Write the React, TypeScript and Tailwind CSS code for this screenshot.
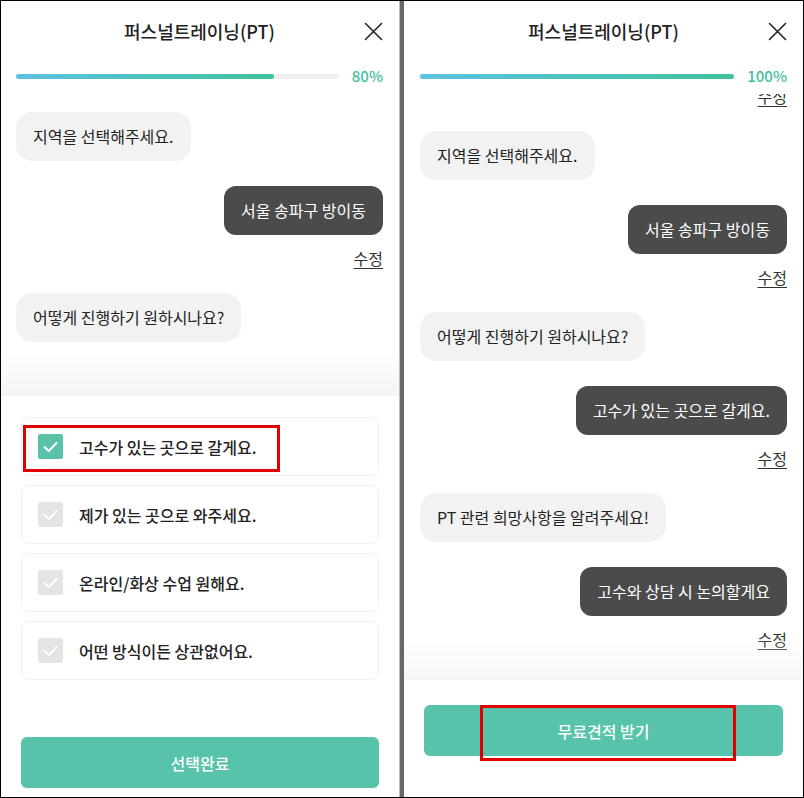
import React from 'react';

const BotBubble = ({ text, className = '' }: { text: string; className?: string }) => (
  <div className={`self-start rounded-2xl bg-[#f2f2f2] px-[17px] py-[12px] text-[16px] leading-[25px] text-[#222] ${className}`}>
    {text}
  </div>
);

const UserBubble = ({ text }: { text: string }) => (
  <div className="mt-[25px] self-end rounded-xl bg-[#4b4b4b] px-[17px] py-[12px] text-[16px] leading-[25px] text-white">
    {text}
  </div>
);

const Edit = ({ className = 'mt-[13px]' }: { className?: string }) => (
  <div className={`self-end text-[16px] leading-5 text-[#333] underline underline-offset-[3px] ${className}`}>수정</div>
);

const Header = ({ percent }: { percent: number }) => (
  <>
    <div className="relative flex h-[60px] items-center justify-center">
      <span className="text-[18px] font-medium text-[#222]">퍼스널트레이닝(PT)</span>
      <svg className="absolute right-0 top-[21px]" width="19" height="19" viewBox="0 0 19 19" fill="none">
        <path d="M1.5 1.5 L17.5 17.5 M17.5 1.5 L1.5 17.5" stroke="#222" strokeWidth="1.6" strokeLinecap="round" />
      </svg>
    </div>
    <div className="flex h-[33px] items-center gap-[13px] pb-[3px]">
      <div className="h-[5px] flex-1 rounded-full bg-[#efefef]">
        <div
          className="h-full rounded-full bg-linear-to-r from-[#5cc2e2] to-[#3ec29b]"
          style={{ width: `${percent}%` }}
        />
      </div>
      <span className="text-[15px] font-medium text-[#3dbf9b]">{percent}%</span>
    </div>
  </>
);

const Check = ({ on }: { on: boolean }) => (
  <div className={`flex h-[25px] w-[25px] items-center justify-center rounded-[2px] ${on ? 'bg-[#5bc2aa]' : 'bg-[#e4e4e4]'}`}>
    <svg width="15" height="12" viewBox="0 0 15 12" fill="none">
      <path d="M1.5 6 L5.8 10 L13.5 2" stroke="white" strokeWidth="2" strokeLinecap="round" strokeLinejoin="round" />
    </svg>
  </div>
);

const OPTIONS = ['고수가 있는 곳으로 갈게요.', '제가 있는 곳으로 와주세요.', '온라인/화상 수업 원해요.', '어떤 방식이든 상관없어요.'];

export default function App() {
  return (
    <div className="flex h-[798px] w-[804px] overflow-hidden border border-black bg-white font-['Noto_Sans_CJK_KR','Noto_Sans',sans-serif]">
      {/* left screen */}
      <div className="flex w-[399px] flex-col border-r border-[#bdbdbd]">
        <div className="pl-[15px] pr-[16px]">
          <Header percent={80} />
        </div>
        <div className="flex h-[257px] flex-col pl-[15px] pr-[16px] pt-[18px]">
          <BotBubble text="지역을 선택해주세요." />
          <UserBubble text="서울 송파구 방이동" />
          <Edit />
          <BotBubble text="어떻게 진행하기 원하시나요?" className="mt-[25px]" />
        </div>
        <div className="h-[45px] bg-linear-to-b from-white to-[#f4f4f4]" />
        <div className="flex flex-1 flex-col px-5 pt-[21px]">
          <div className="flex flex-col gap-[9px]">
            {OPTIONS.map((o, i) => (
              <div key={o} className="relative flex h-[59px] items-center gap-4 rounded-lg border border-[#f0f0f0] pl-[16px]">
                <Check on={i === 0} />
                <span className="text-[16px] font-medium text-[#222]">{o}</span>
                {i === 0 && <div className="absolute left-[1px] top-[7px] h-[47px] w-[257px] border-[3px] border-[#e00000]" />}
              </div>
            ))}
          </div>
          <button className="mt-[57px] h-[51px] w-full rounded-md bg-[#56c3aa] text-[16px] font-medium text-white">선택완료</button>
        </div>
      </div>
      <div className="w-[4px] bg-[#686868]" />
      {/* right screen */}
      <div className="flex flex-1 flex-col">
        <div className="pl-[16px] pr-[16px]">
          <Header percent={100} />
        </div>
        <div className="h-[586px] overflow-hidden px-[16px]">
          <div className="-mt-[8px] flex flex-col">
            <Edit className="" />
            <BotBubble text="지역을 선택해주세요." className="mt-[25px]" />
            <UserBubble text="서울 송파구 방이동" />
            <Edit />
            <BotBubble text="어떻게 진행하기 원하시나요?" className="mt-[25px]" />
            <UserBubble text="고수가 있는 곳으로 갈게요." />
            <Edit />
            <BotBubble text="PT 관련 희망사항을 알려주세요!" className="mt-[25px]" />
            <UserBubble text="고수와 상담 시 논의할게요" />
            <Edit />
          </div>
        </div>
        <div className="relative -mt-[44px] h-[44px] bg-linear-to-b from-white/0 to-[#f4f4f4]/70" />
        <div className="flex flex-1 flex-col px-5 pt-[25px]">
          <div className="relative">
            <button className="h-[51px] w-full rounded-md bg-[#56c3aa] text-[16px] font-medium text-white">무료견적 받기</button>
            <div className="absolute left-[56px] top-0 h-[56px] w-[256px] border-[3px] border-[#e00000]" />
          </div>
        </div>
      </div>
    </div>
  );
}
